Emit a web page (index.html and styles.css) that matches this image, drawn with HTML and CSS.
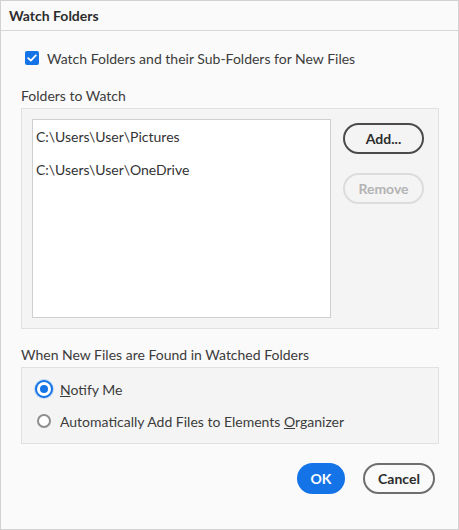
FILE: index.html
```html
<!DOCTYPE html>
<html>
<head>
<meta charset="utf-8">
<link rel="stylesheet" href="styles.css">
</head>
<body>
<div class="window">
  <div class="titlebar">Watch Folders</div>
  <div class="content">
    <label class="check-row">
      <span class="checkbox">
        <svg width="10" height="8" viewBox="0 0 10 8"><path d="M1.2 4.2 L3.8 6.6 L8.8 1.4" fill="none" stroke="#fff" stroke-width="1.8" stroke-linecap="round" stroke-linejoin="round"/></svg>
      </span>
      <span>Watch Folders and their Sub-Folders for New Files</span>
    </label>
    <div class="section-label">Folders to Watch</div>
    <div class="group folders">
      <div class="listbox">
        <div class="item">C:\Users\User\Pictures</div>
        <div class="item">C:\Users\User\OneDrive</div>
      </div>
      <div class="side-buttons">
        <button class="btn btn-secondary">Add...</button>
        <button class="btn btn-disabled">Remove</button>
      </div>
    </div>
    <div class="section-label second">When New Files are Found in Watched Folders</div>
    <div class="group radios">
      <div class="radio-row">
        <span class="radio checked"></span>
        <span><u>N</u>otify Me</span>
      </div>
      <div class="radio-row">
        <span class="radio"></span>
        <span>Automatically Add Files to Elements <u>O</u>rganizer</span>
      </div>
    </div>
    <div class="footer">
      <button class="btn btn-primary">OK</button>
      <button class="btn btn-cancel">Cancel</button>
    </div>
  </div>
</div>
</body>
</html>
```
FILE: styles.css
```css
html, body {
  margin: 0;
  padding: 0;
  background: #fafafa;
}
body {
  font-family: "Lato", "Open Sans", sans-serif;
  font-size: 14px;
  color: #3c3c3c;
}
.window {
  width: 457px;
  height: 528px;
  border: 1px solid #d2d2d2;
  background: #fafafa;
  display: flex;
  flex-direction: column;
}
.titlebar {
  height: 30px;
  box-sizing: border-box;
  border-bottom: 1px solid #d6d6d6;
  padding-left: 8px;
  display: flex;
  align-items: center;
  font-weight: bold;
  font-size: 14px;
  color: #2c2c2c;
}
.content {
  padding: 0 19px 0 20px;
  display: flex;
  flex-direction: column;
}
.check-row {
  display: flex;
  align-items: center;
  gap: 8px;
  margin-top: 19px;
  margin-left: 4px;
  height: 16px;
}
.checkbox {
  width: 14px;
  height: 14px;
  border-radius: 2px;
  background: #1473e6;
  display: flex;
  align-items: center;
  justify-content: center;
}
.section-label {
  margin-top: 20px;
  height: 20px;
  line-height: 20px;
}
.section-label.second {
  margin-top: 16px;
}
.group {
  background: #f4f4f4;
  border: 1px solid #e1e1e1;
  box-sizing: border-box;
  width: 418px;
}
.folders {
  margin-top: 2px;
  height: 221px;
  display: flex;
  padding: 10px 14px 10px 10px;
  gap: 12px;
}
.listbox {
  width: 299px;
  height: 199px;
  box-sizing: border-box;
  background: #fff;
  border: 1px solid #cfcfcf;
  padding: 6px 0 0 3px;
}
.item {
  height: 33px;
  line-height: 21px;
  color: #333;
}
.side-buttons {
  display: flex;
  flex-direction: column;
  gap: 19px;
  padding-top: 4px;
}
.btn {
  font-family: inherit;
  font-size: 14px;
  font-weight: bold;
  border-radius: 16px;
  height: 31px;
  box-sizing: border-box;
  padding: 0;
  background: transparent;
}
.btn-secondary {
  width: 81px;
  border: 2px solid #4b4b4b;
  color: #2c2c2c;
}
.btn-disabled {
  width: 81px;
  border: 2px solid #dcdcdc;
  color: #b3b3b3;
}
.radios {
  margin-top: 2px;
  height: 77px;
  padding: 11px 0 0 13px;
  display: flex;
  flex-direction: column;
  gap: 12px;
}
.radio-row {
  display: flex;
  align-items: center;
  gap: 8px;
  height: 20px;
}
.radio {
  width: 14px;
  height: 14px;
  box-sizing: border-box;
  border-radius: 50%;
  border: 2px solid #8e8e8e;
  background: #fff;
  margin-left: 2px;
  margin-right: 1px;
}
.radio.checked {
  width: 18px;
  height: 18px;
  margin: 0 -1px 0 0;
  border: 2px solid #1473e6;
  box-shadow: 0 0 0 1px #bcd7f7;
  position: relative;
}
.radio.checked::after {
  content: "";
  position: absolute;
  left: 3px;
  top: 3px;
  width: 8px;
  height: 8px;
  border-radius: 50%;
  background: #1473e6;
}
.footer {
  display: flex;
  justify-content: flex-end;
  gap: 18px;
  margin-top: 19px;
  padding-right: 4px;
}
.btn-primary {
  width: 48px;
  border: none;
  background: #1473e6;
  color: #fff;
}
.btn-cancel {
  width: 72px;
  border: 2px solid #6e6e6e;
  color: #2c2c2c;
}
```
